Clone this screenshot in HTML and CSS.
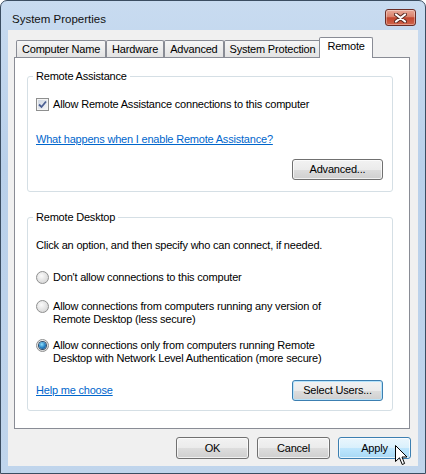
FILE: index.html
```html
<!DOCTYPE html>
<html lang="en">
<head>
    <meta charset="UTF-8">
    <title>System Properties</title>
    <link rel="stylesheet" href="styles.css">
</head>
<body>
    <div class="window">
        <div class="titlebar">
            <span class="title">System Properties</span>
            <button class="close" aria-label="Close">
                <svg width="13" height="10" viewBox="0 0 13 10">
                    <path d="M2 1.5 L11 8.5 M11 1.5 L2 8.5" stroke="#5a2a22" stroke-width="4" stroke-linecap="round"/>
                    <path d="M2 1.5 L11 8.5 M11 1.5 L2 8.5" stroke="#ffffff" stroke-width="2.2" stroke-linecap="round"/>
                </svg>
            </button>
        </div>

        <div class="client">
            <div class="tabs">
                <div class="tab">Computer Name</div>
                <div class="tab">Hardware</div>
                <div class="tab">Advanced</div>
                <div class="tab">System Protection</div>
                <div class="tab active">Remote</div>
            </div>

            <div class="panel">
                <!-- Asistencia remota -->
                <div class="group assist">
                    <span class="group-title">Remote Assistance</span>
                    <label class="option">
                        <span class="checkbox checked">
                            <svg width="11" height="11" viewBox="0 0 11 11">
                                <path d="M2 5.5 L4.5 8 L9 2.5" fill="none" stroke="#4b5f93" stroke-width="1.8"/>
                            </svg>
                        </span>
                        <span>Allow Remote Assistance connections to this computer</span>
                    </label>
                    <a href="#" class="link first-link">What happens when I enable Remote Assistance?</a>
                    <div class="actions">
                        <button class="btn wide">Advanced...</button>
                    </div>
                </div>

                <!-- Escritorio remoto -->
                <div class="group desktop">
                    <span class="group-title">Remote Desktop</span>
                    <p class="hint">Click an option, and then specify who can connect, if needed.</p>
                    <label class="option radio-1">
                        <span class="radio"></span>
                        <span>Don't allow connections to this computer</span>
                    </label>
                    <label class="option radio-2">
                        <span class="radio"></span>
                        <span>Allow connections from computers running any version of<br>Remote Desktop (less secure)</span>
                    </label>
                    <label class="option radio-3">
                        <span class="radio selected"></span>
                        <span>Allow connections only from computers running Remote<br>Desktop with Network Level Authentication (more secure)</span>
                    </label>
                    <div class="actions split">
                        <a href="#" class="link">Help me choose</a>
                        <button class="btn wide focus">Select Users...</button>
                    </div>
                </div>
            </div>

            <div class="footer">
                <button class="btn">OK</button>
                <button class="btn">Cancel</button>
                <button class="btn hover">Apply</button>
            </div>
        </div>

        <svg class="cursor" width="13" height="21" viewBox="0 0 13 21">
            <path d="M0.5 0.5 L0.5 16.5 L4.5 12.8 L7.2 19.5 L9.6 18.5 L7 12 L12 12 Z" fill="#ffffff" stroke="#000000" stroke-width="1"/>
        </svg>
    </div>
</body>
</html>
```

FILE: styles.css
```css
/* Ventana de propiedades */
* {
    box-sizing: border-box;
}

body {
    margin: 0;
    font-family: "Liberation Sans", Arial, sans-serif;
    font-size: 11px;
    letter-spacing: -0.2px;
    color: #000;
    background: #fff;
}

.window {
    position: relative;
    width: 426px;
    height: 474px;
    border: 1px solid #3b4d61;
    border-radius: 7px 7px 0 0;
    background: linear-gradient(180deg, #c8dbf0 0%, #b9d0ea 35%, #c0d5ec 100%);
    display: flex;
    flex-direction: column;
    overflow: hidden;
}

.titlebar {
    height: 29px;
    display: flex;
    align-items: flex-start;
    padding: 0 9px 0 11px;
}

.title {
    padding-top: 11px;
    line-height: 15px;
    font-size: 11.5px;
    letter-spacing: 0;
    color: #111;
}

.close {
    margin-left: auto;
    margin-top: 8px;
    width: 31px;
    height: 17px;
    padding: 0;
    border: 1px solid #6b2d26;
    border-radius: 3px;
    background: linear-gradient(180deg, #e9a999 0%, #d9826d 45%, #c2462f 52%, #d0664c 100%);
    box-shadow: inset 0 0 0 1px rgba(255, 255, 255, 0.35);
    display: flex;
    align-items: center;
    justify-content: center;
}

.client {
    margin: 0 7px 7px;
    height: 436px;
    background: #f0f0f0;
    display: flex;
    flex-direction: column;
}

/* Pestañas */
.tabs {
    position: relative;
    z-index: 1;
    height: 27px;
    display: flex;
    align-items: flex-end;
    padding: 7px 0 0 8px;
}

.tab {
    height: 17px;
    padding: 0 5px;
    border: 1px solid #898c95;
    border-bottom: none;
    border-radius: 2px 2px 0 0;
    background: linear-gradient(180deg, #f6f6f6, #e3e3e3);
    line-height: 16px;
    white-space: nowrap;
}

.tab.active {
    height: 21px;
    margin: 0 0 -1px -2px;
    padding: 0 7px;
    background: #fff;
    line-height: 17px;
}

.panel {
    height: 372px;
    margin: 0 8px 0 6px;
    padding: 18px 16px 0 12px;
    border: 1px solid #898c95;
    background: #fff;
}

/* Grupos */
.group {
    position: relative;
    border: 1px solid #d5dfe5;
    border-radius: 3px;
    padding: 0 9px 0 8px;
    line-height: 13px;
}

.group-title {
    position: absolute;
    top: -7px;
    left: 5px;
    padding: 0 3px;
    background: #fff;
}

.assist {
    padding-top: 21px;
    padding-bottom: 11px;
}

.desktop {
    margin-top: 25px;
    padding-top: 21px;
    padding-bottom: 9px;
}

.hint {
    margin: 0;
}

.option {
    display: flex;
    align-items: flex-start;
    gap: 4px;
}

.radio-1 { margin-top: 19px; }
.radio-2 { margin-top: 16px; }
.radio-3 { margin-top: 13px; }

.checkbox {
    width: 13px;
    height: 13px;
    flex: none;
    border: 1px solid #8e8f8f;
    background: linear-gradient(135deg, #cdd6e2, #f7f7f7);
    box-shadow: inset 0 0 0 1px #f4f4f4;
    display: flex;
    align-items: center;
    justify-content: center;
}

.radio {
    width: 13px;
    height: 13px;
    flex: none;
    border-radius: 50%;
    border: 1px solid #8e8f8f;
    background: radial-gradient(circle at 40% 35%, #fbfbfb 0%, #e6e6e6 45%, #cfcfcf 100%);
    display: flex;
    align-items: center;
    justify-content: center;
}

.radio.selected::after {
    content: "";
    width: 7px;
    height: 7px;
    border-radius: 50%;
    background: radial-gradient(circle at 40% 35%, #8fe0fb 0%, #2a86c8 50%, #0d3f76 100%);
    box-shadow: 0 0 0 1px #2f4d6a;
}

.link {
    color: #0066cc;
    text-decoration: underline;
}

.first-link {
    display: inline-block;
    margin-top: 22px;
}

.actions {
    display: flex;
    justify-content: flex-end;
    margin-top: 13px;
}

.actions.split {
    justify-content: space-between;
    align-items: center;
    margin-top: 15px;
}

/* Botones */
.btn {
    width: 73px;
    height: 22px;
    padding: 0;
    font: inherit;
    letter-spacing: inherit;
    color: #000;
    border: 1px solid #707070;
    border-radius: 3px;
    background: linear-gradient(180deg, #f2f2f2 0%, #ebebeb 50%, #dddddd 51%, #cfcfcf 100%);
    box-shadow: inset 0 0 0 1px rgba(255, 255, 255, 0.7);
}

.btn.wide {
    width: 91px;
    height: 21px;
}

.btn.focus {
    border-color: #3c7fb1;
    box-shadow: inset 0 0 0 1px #b6e3fb;
}

.btn.hover {
    border-color: #3c7fb1;
    background: linear-gradient(180deg, #eaf6fd 0%, #d9f0fc 50%, #bee6fd 51%, #a7d9f5 100%);
}

.footer {
    display: flex;
    justify-content: flex-end;
    gap: 8px;
    padding: 8px 7px 0 0;
}

.cursor {
    position: absolute;
    left: 394px;
    top: 444px;
}
```
